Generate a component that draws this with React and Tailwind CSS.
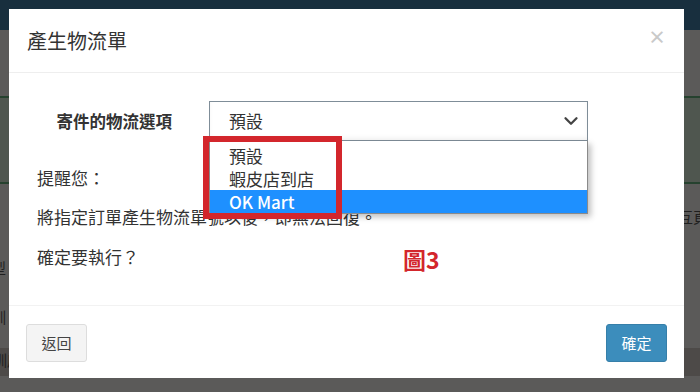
import React from 'react';
import { ChevronDown } from 'lucide-react';

const options = ['預設', '蝦皮店到店', 'OK Mart'];

export default function App() {
    return (
        <div className="relative h-[392px] w-[700px] overflow-hidden bg-[#5b5a59] font-['Noto_Sans_CJK_TC','Noto_Sans',sans-serif] text-[#333]">
            {/* page behind the backdrop */}
            <div className="flex h-full flex-col text-[15px] text-[#1f1f1f]">
                <div className="h-[30px] shrink-0 bg-[#182f3e]" />
                <div className="h-[66px] shrink-0" />
                <div className="h-[88px] shrink-0 border-y-2 border-[#26422f] bg-[#4f564f]" />
                <div className="flex h-[66px] shrink-0 items-center justify-end">
                    <span className="-mr-[8px]">互頁</span>
                </div>
                <div className="flex h-[36px] shrink-0 items-center">
                    <span className="-ml-[24px]">類型</span>
                </div>
                <div className="flex h-[62px] shrink-0 items-center">
                    <span className="-ml-[24px]">資訓</span>
                </div>
                <div className="flex h-[28px] shrink-0 items-end bg-[#4d4a48] pb-[5px]">
                    <span className="-ml-[8px] w-[86px]">訓店</span>
                    <span className="w-[320px]">2022-03-31 15:41:05</span>
                    <span>220331BTCH1V07</span>
                </div>
            </div>

            {/* modal */}
            <div className="absolute left-[9px] top-[9px] flex h-[369px] w-[675px] flex-col bg-white">
                <div className="flex h-[64px] shrink-0 items-center justify-between border-b border-[#eeeeee] pl-[18px] pr-[18px]">
                    <h4 className="text-[20px] leading-none text-[#333]">產生物流單</h4>
                    <button className="-mt-[10px] text-[18px] font-bold leading-none text-[#c9c9c9]">×</button>
                </div>

                <div className="relative flex-1 px-[28px] pt-[28px] text-[17px]">
                    <div className="flex items-center">
                        <label className="w-[172px] pr-[37px] text-right text-[16.5px] font-bold text-[#333]">寄件的物流選項</label>
                        <div className="flex h-[40px] w-[379px] items-center justify-between border border-[#7f8d98] pl-[19px] pr-[5px] shadow-[inset_0_-3px_4px_rgba(0,0,0,0.04)]">
                            <span>預設</span>
                            <ChevronDown size={22} strokeWidth={2.5} className="text-[#444]" />
                        </div>
                    </div>

                    <p className="mt-[25px] leading-[24px]">提醒您：</p>
                    <p className="mt-[15px] leading-[24px]">將指定訂單產生物流單號以後，即無法回復。</p>
                    <p className="mt-[16px] leading-[24px]">確定要執行？</p>

                    {/* open dropdown list */}
                    <div className="absolute left-[200px] top-[68px] w-[379px] border-x border-b border-[#8a8a8a] bg-white pt-[3px] shadow-[3px_3px_6px_rgba(0,0,0,0.25)]">
                        {options.map((opt, i) => (
                            <div
                                key={opt}
                                className={i === 2
                                    ? 'flex h-[23px] items-center bg-[#1e90ff] px-[19px] font-medium text-white'
                                    : 'flex h-[23px] items-center px-[19px] text-[#333]'}
                            >
                                {opt}
                            </div>
                        ))}
                    </div>

                    {/* annotation */}
                    <div className="absolute left-[194px] top-[63px] h-[83px] w-[139px] border-[6px] border-[#d3262c]" />
                    <div className="absolute left-[394px] top-[175px] text-[23px] font-bold leading-none text-[#d3262c]">圖3</div>
                </div>

                <div className="flex h-[73px] shrink-0 items-start justify-between border-t border-[#f2f2f2] px-[17px] pt-[18px] text-[15px]">
                    <button className="h-[38px] w-[61px] rounded-[3px] border border-[#dddddd] bg-[#f4f4f4] text-[#444]">返回</button>
                    <button className="h-[38px] w-[61px] rounded-[3px] border border-[#367fa9] bg-[#3c8dbc] text-white">確定</button>
                </div>
            </div>
        </div>
    );
}
